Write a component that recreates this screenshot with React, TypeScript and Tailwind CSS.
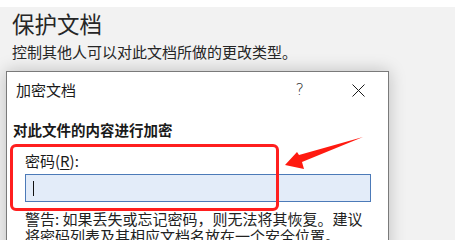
const cjk = { fontFamily: '"Noto Sans CJK SC", "Noto Sans", sans-serif' }

function CloseIcon() {
  return (
    <svg width="13" height="13" viewBox="0 0 13 13" className="block">
      <path d="M0.5 0.5 L12.5 12.5 M12.5 0.5 L0.5 12.5" stroke="#1a1a1a" strokeWidth="1" fill="none" />
    </svg>
  )
}

function Arrow() {
  // red annotation arrow pointing at the password box
  return (
    <svg width="90" height="40" viewBox="0 0 90 40" className="absolute left-[280px] top-[133px]">
      <path d="M5 32 L17 19 L19 22 L83 4 L22 29 L24 36 Z" fill="#ff1a10" />
    </svg>
  )
}

export default function App() {
  return (
    <div className="relative w-[455px] h-[240px] overflow-hidden bg-[#f2f2f2] text-[#1a1a1a]" style={cjk}>
      <div className="h-[7px] bg-white" />
      <div className="pl-[12px] pt-[2px]">
        <h1 className="text-[22.5px] leading-[28px] font-normal text-[#262626]">保护文档</h1>
        <p className="mt-[5px] text-[15px] leading-[20px] text-[#262626]">控制其他人可以对此文档所做的更改类型。</p>
      </div>

      <div className="ml-[6px] mt-[9px] w-[383px] h-[200px] bg-white border border-[#7a7a7a] shadow-[0_0_16px_rgba(0,0,0,0.22)]">
        <div className="flex items-start h-[36px] pl-[9px] pt-[8px]">
          <span className="text-[15px] leading-[20px]">加密文档</span>
          <span className="ml-auto text-[16px] leading-[20px] text-[#333]" style={{ fontFamily: '"DejaVu Sans", sans-serif', fontWeight: 200 }}>?</span>
          <span className="ml-[48px] mr-[23px] mt-[4px]">
            <CloseIcon />
          </span>
        </div>
        <div className="pl-[6px] pt-[12px]">
          <p className="text-[14.5px] leading-[20px] font-bold">对此文件的内容进行加密</p>
        </div>
        <div className="pl-[18px] pr-[17px] pt-[11px]">
          <label className="block text-[15px] leading-[20px]">
            密码(<span className="underline underline-offset-2">R</span>):
          </label>
          <div className="mt-[3px] h-[28px] bg-[#e3ecf9] border border-[#4c7ab8] flex items-center pl-[7px]">
            <div className="w-[1px] h-[15px] bg-[#111]" />
          </div>
          <p className="mt-[8px] text-[15px] leading-[17px] text-[#222]">
            警告: 如果丢失或忘记密码，则无法将其恢复。建议将密码列表及其相应文档名放在一个安全位置。
          </p>
        </div>
      </div>

      <div className="absolute left-[10px] top-[144px] w-[269px] h-[67px] border-[3px] border-[#ff1f1f] rounded-[6px]" />
      <Arrow />
    </div>
  )
}
